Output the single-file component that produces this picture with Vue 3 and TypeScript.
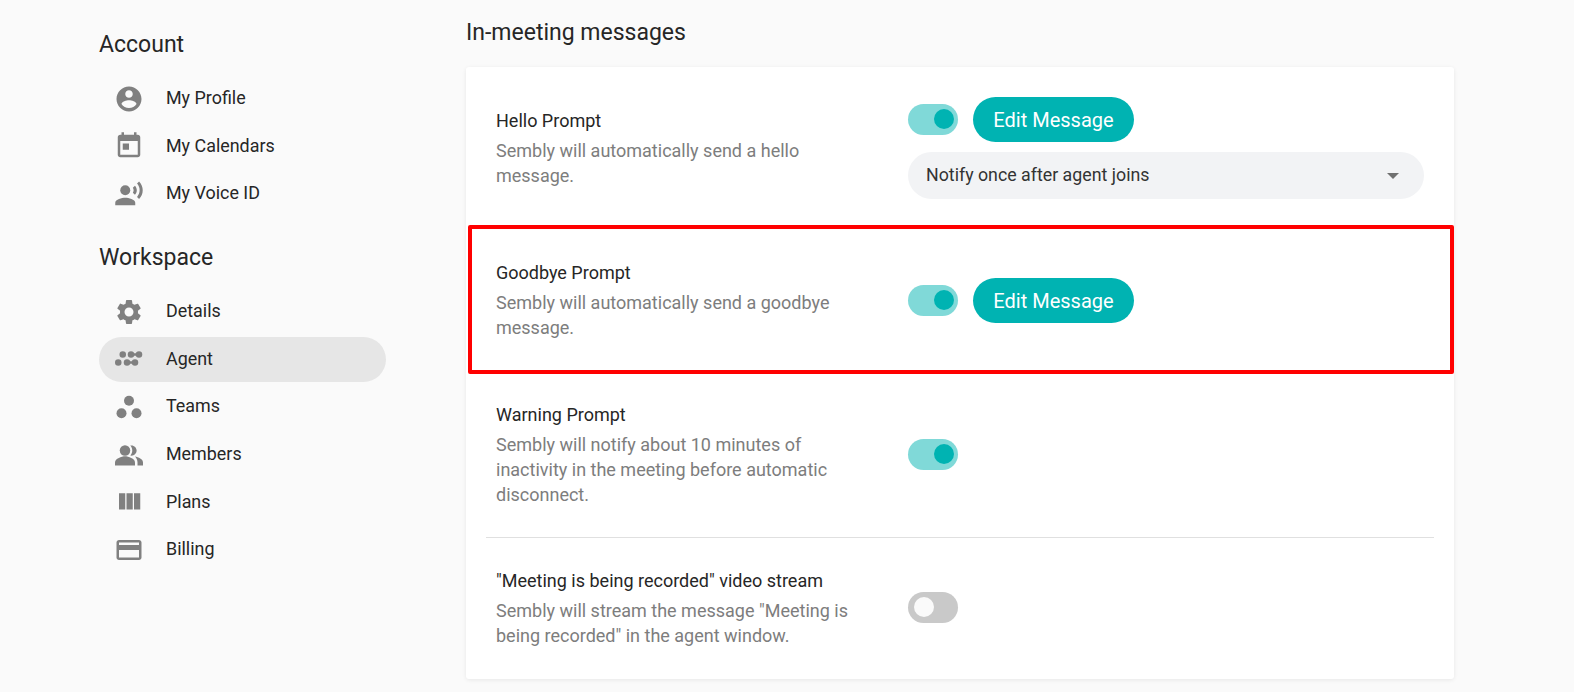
<script setup lang="ts">
interface NavItem {
  label: string
  icon: string
  active?: boolean
}

const accountItems: NavItem[] = [
  { label: 'My Profile', icon: 'profile' },
  { label: 'My Calendars', icon: 'calendar' },
  { label: 'My Voice ID', icon: 'voice' },
]

const workspaceItems: NavItem[] = [
  { label: 'Details', icon: 'details' },
  { label: 'Agent', icon: 'agent', active: true },
  { label: 'Teams', icon: 'teams' },
  { label: 'Members', icon: 'members' },
  { label: 'Plans', icon: 'plans' },
  { label: 'Billing', icon: 'billing' },
]

const sections = [
  { title: 'Account', items: accountItems },
  { title: 'Workspace', items: workspaceItems },
]
</script>

<template>
  <div class="page">
    <aside class="sidebar">
      <section v-for="section in sections" :key="section.title" class="nav-section">
        <h2 class="nav-title">{{ section.title }}</h2>
        <ul class="nav-list">
          <li v-for="item in section.items" :key="item.label" class="nav-item" :class="{ active: item.active }">
            <svg class="nav-icon" viewBox="0 0 24 24" fill="currentColor">
              <path v-if="item.icon === 'profile'" d="M12 2C6.48 2 2 6.48 2 12s4.48 10 10 10 10-4.48 10-10S17.52 2 12 2zm0 3c1.66 0 3 1.34 3 3s-1.34 3-3 3-3-1.34-3-3 1.34-3 3-3zm0 14.2c-2.5 0-4.71-1.28-6-3.22.03-1.99 4-3.08 6-3.08 1.99 0 5.97 1.09 6 3.08-1.29 1.94-3.5 3.22-6 3.22z" />
              <path v-else-if="item.icon === 'calendar'" d="M19 3h-1V1h-2v2H8V1H6v2H5c-1.11 0-1.99.9-1.99 2L3 19c0 1.1.89 2 2 2h14c1.1 0 2-.9 2-2V5c0-1.1-.9-2-2-2zm0 16H5V8h14v11zM7 10h5v5H7z" />
              <template v-else-if="item.icon === 'voice'">
                <circle cx="9" cy="9" r="4" />
                <path d="M9 15c-2.67 0-8 1.34-8 4v2h16v-2c0-2.66-5.33-4-8-4zm7.76-9.64l-1.68 1.69c.84 1.18.84 2.71 0 3.89l1.68 1.69c2.02-2.02 2.02-5.07 0-7.27zM20.07 2l-1.63 1.63c2.77 3.02 2.77 7.56 0 10.74L20.07 16c3.9-3.89 3.91-9.95 0-14z" />
              </template>
              <path v-else-if="item.icon === 'details'" d="M19.14 12.94c.04-.3.06-.61.06-.94 0-.32-.02-.64-.07-.94l2.03-1.58c.18-.14.23-.41.12-.61l-1.92-3.32c-.12-.22-.37-.29-.59-.22l-2.39.96c-.5-.38-1.03-.7-1.62-.94l-.36-2.54c-.04-.24-.24-.41-.48-.41h-3.84c-.24 0-.43.17-.47.41l-.36 2.54c-.59.24-1.13.57-1.62.94l-2.39-.96c-.22-.08-.47 0-.59.22L2.74 8.87c-.12.21-.08.47.12.61l2.03 1.58c-.05.3-.09.63-.09.94s.02.64.07.94l-2.03 1.58c-.18.14-.23.41-.12.61l1.92 3.32c.12.22.37.29.59.22l2.39-.96c.5.38 1.03.7 1.62.94l.36 2.54c.05.24.24.41.48.41h3.84c.24 0 .44-.17.47-.41l.36-2.54c.59-.24 1.13-.56 1.62-.94l2.39.96c.22.08.47 0 .59-.22l1.92-3.32c.12-.22.07-.47-.12-.61l-2.01-1.58zM12 15.6c-1.98 0-3.6-1.62-3.6-3.6s1.62-3.6 3.6-3.6 3.6 1.62 3.6 3.6-1.62 3.6-3.6 3.6z" />
              <template v-else-if="item.icon === 'agent'">
                <circle cx="7" cy="8.4" r="2.6" />
                <circle cx="13.6" cy="8.4" r="2.6" />
                <circle cx="20" cy="8.4" r="2.6" />
                <rect x="13.6" y="7.4" width="6.4" height="2" />
                <circle cx="3.4" cy="14.8" r="2.6" />
                <circle cx="10.4" cy="14.8" r="2.6" />
                <circle cx="16.8" cy="14.8" r="2.6" />
                <rect x="10.4" y="13.8" width="6.4" height="2" />
              </template>
              <template v-else-if="item.icon === 'teams'">
                <circle cx="12" cy="7" r="4" />
                <circle cx="6" cy="17" r="4" />
                <circle cx="18" cy="17" r="4" />
              </template>
              <template v-else-if="item.icon === 'members'">
                <circle cx="8.8" cy="9.2" r="4.2" />
                <path d="M.8 21.2v-2.4c0-3.2 5.3-5 8-5s8 1.8 8 5v2.4z" />
                <path d="M14 5.1c2.3 0 4.1 1.9 4.1 4.1s-1.8 4.1-4.1 4.1c-.3 0-.7 0-1-.1 1-1.1 1.6-2.5 1.6-4s-.6-2.9-1.6-4c.3-.1.7-.1 1-.1z" />
                <path d="M16.8 14c2.7.5 6.4 1.9 6.4 4.8v2.4h-4.4v-2.4c0-1.9-.8-3.5-2-4.8z" />
              </template>
              <path v-else-if="item.icon === 'plans'" d="M10 18h5V5h-5v13zm-6 0h5V5H4v13zM16 5v13h5V5h-5z" />
              <path v-else-if="item.icon === 'billing'" d="M20 4H4c-1.11 0-1.99.89-1.99 2L2 18c0 1.11.89 2 2 2h16c1.11 0 2-.89 2-2V6c0-1.11-.89-2-2-2zm0 14H4v-6h16v6zm0-10H4V6h16v2z" />
            </svg>
            <span class="nav-label">{{ item.label }}</span>
          </li>
        </ul>
      </section>
    </aside>

    <main class="content">
      <h1 class="content-title">In-meeting messages</h1>
      <div class="card">
        <div class="row row-hello">
          <div class="row-text">
            <div class="row-title">Hello Prompt</div>
            <p class="row-desc">Sembly will automatically send a hello message.</p>
          </div>
          <div class="row-controls">
            <div class="control-line">
              <span class="switch on"><span class="thumb"></span></span>
              <button class="edit-btn">Edit Message</button>
            </div>
            <div class="select">
              <span class="select-value">Notify once after agent joins</span>
              <span class="caret"></span>
            </div>
          </div>
        </div>

        <div class="row row-goodbye">
          <div class="row-text">
            <div class="row-title">Goodbye Prompt</div>
            <p class="row-desc">Sembly will automatically send a goodbye message.</p>
          </div>
          <div class="row-controls">
            <div class="control-line">
              <span class="switch on"><span class="thumb"></span></span>
              <button class="edit-btn">Edit Message</button>
            </div>
          </div>
          <div class="highlight"></div>
        </div>

        <div class="row row-warning">
          <div class="row-text">
            <div class="row-title">Warning Prompt</div>
            <p class="row-desc">Sembly will notify about 10 minutes of inactivity in the meeting before automatic disconnect.</p>
          </div>
          <div class="row-controls">
            <span class="switch on"><span class="thumb"></span></span>
          </div>
        </div>

        <div class="divider"></div>

        <div class="row row-stream">
          <div class="row-text">
            <div class="row-title">"Meeting is being recorded" video stream</div>
            <p class="row-desc">Sembly will stream the message "Meeting is being recorded" in the agent window.</p>
          </div>
          <div class="row-controls">
            <span class="switch"><span class="thumb"></span></span>
          </div>
        </div>
      </div>
    </main>
  </div>
</template>

<style>
html,
body {
  background: #fafafa;
}
</style>

<style scoped>
.page {
  display: flex;
  height: 692px;
  overflow: hidden;
  padding-left: 99px;
  box-sizing: border-box;
  font-family: Roboto, "Liberation Sans", sans-serif;
  color: #262626;
}

.sidebar {
  width: 287px;
  flex-shrink: 0;
  padding-top: 30px;
}

.nav-section + .nav-section {
  margin-top: 27px;
}

.nav-title {
  margin: 0 0 16px;
  font-size: 23px;
  font-weight: 400;
  line-height: 30px;
}

.nav-list {
  list-style: none;
  margin: 0;
  padding: 0;
  display: flex;
  flex-direction: column;
  gap: 2.6px;
}

.nav-item {
  display: flex;
  align-items: center;
  height: 45px;
  padding-left: 15px;
  border-radius: 23px;
}

.nav-item.active {
  background: #e6e6e6;
}

.nav-icon {
  width: 30px;
  height: 30px;
  flex-shrink: 0;
  color: #808080;
}

.nav-label {
  margin-left: 22px;
  margin-bottom: 2px;
  font-size: 17.9px;
}

.content {
  width: 988px;
  margin-left: 80px;
  flex-shrink: 0;
}

.content-title {
  margin: 18px 0 19px;
  font-size: 23px;
  font-weight: 400;
  line-height: 30px;
}

.card {
  background: #fff;
  box-shadow: 0 1px 4px rgba(0, 0, 0, 0.08);
  border-radius: 3px;
}

.row {
  position: relative;
  display: flex;
  align-items: center;
  padding: 28px 30px 30px;
}

.row-hello {
  padding-top: 30px;
  padding-bottom: 26px;
}

.row-goodbye {
  padding-top: 34.5px;
  padding-bottom: 34.5px;
}

.row-goodbye .row-controls {
  margin-top: 2px;
}

.row-stream {
  padding-top: 29.5px;
  padding-bottom: 31.5px;
}

.row-text {
  width: 412px;
  flex-shrink: 0;
  padding-right: 50px;
  box-sizing: border-box;
}

.row-title {
  font-size: 18px;
  line-height: 25px;
  font-weight: 400;
}

.row-desc {
  margin: 5px 0 0;
  font-size: 18px;
  line-height: 25px;
  color: #7d7d7d;
}

.row-controls {
  flex: 1;
  display: flex;
  flex-direction: column;
  align-items: flex-start;
}

.control-line {
  display: flex;
  align-items: center;
  gap: 15px;
}

.switch {
  display: block;
  position: relative;
  width: 50px;
  height: 31px;
  border-radius: 16px;
  background: #c9c9c9;
}

.switch.on {
  background: #80d9d8;
}

.thumb {
  position: absolute;
  top: 4.5px;
  left: 6px;
  width: 20px;
  height: 20px;
  border-radius: 50%;
  background: #fafafa;
}

.switch.on .thumb {
  left: 26px;
  background: #00b3b2;
}

.edit-btn {
  width: 161px;
  height: 45px;
  border: none;
  border-radius: 23px;
  background: #00b3b2;
  color: #fff;
  font-family: inherit;
  font-size: 20px;
  padding: 0;
}

.select {
  display: flex;
  align-items: center;
  justify-content: space-between;
  box-sizing: border-box;
  width: 516px;
  height: 47px;
  margin-top: 10px;
  padding: 0 25px 0 18px;
  border-radius: 24px;
  background: #f2f3f5;
  font-size: 17.8px;
  color: #333;
}

.select-value {
  margin-bottom: 2px;
}

.caret {
  width: 0;
  height: 0;
  border-left: 6.5px solid transparent;
  border-right: 6.5px solid transparent;
  border-top: 6.5px solid #707070;
}

.divider {
  height: 1px;
  margin: 0 20px;
  background: #e0e0e0;
}

.highlight {
  position: absolute;
  left: 2px;
  right: 0;
  top: 0;
  bottom: 0;
  border: 4px solid #ff0000;
  border-radius: 2px;
}
</style>
